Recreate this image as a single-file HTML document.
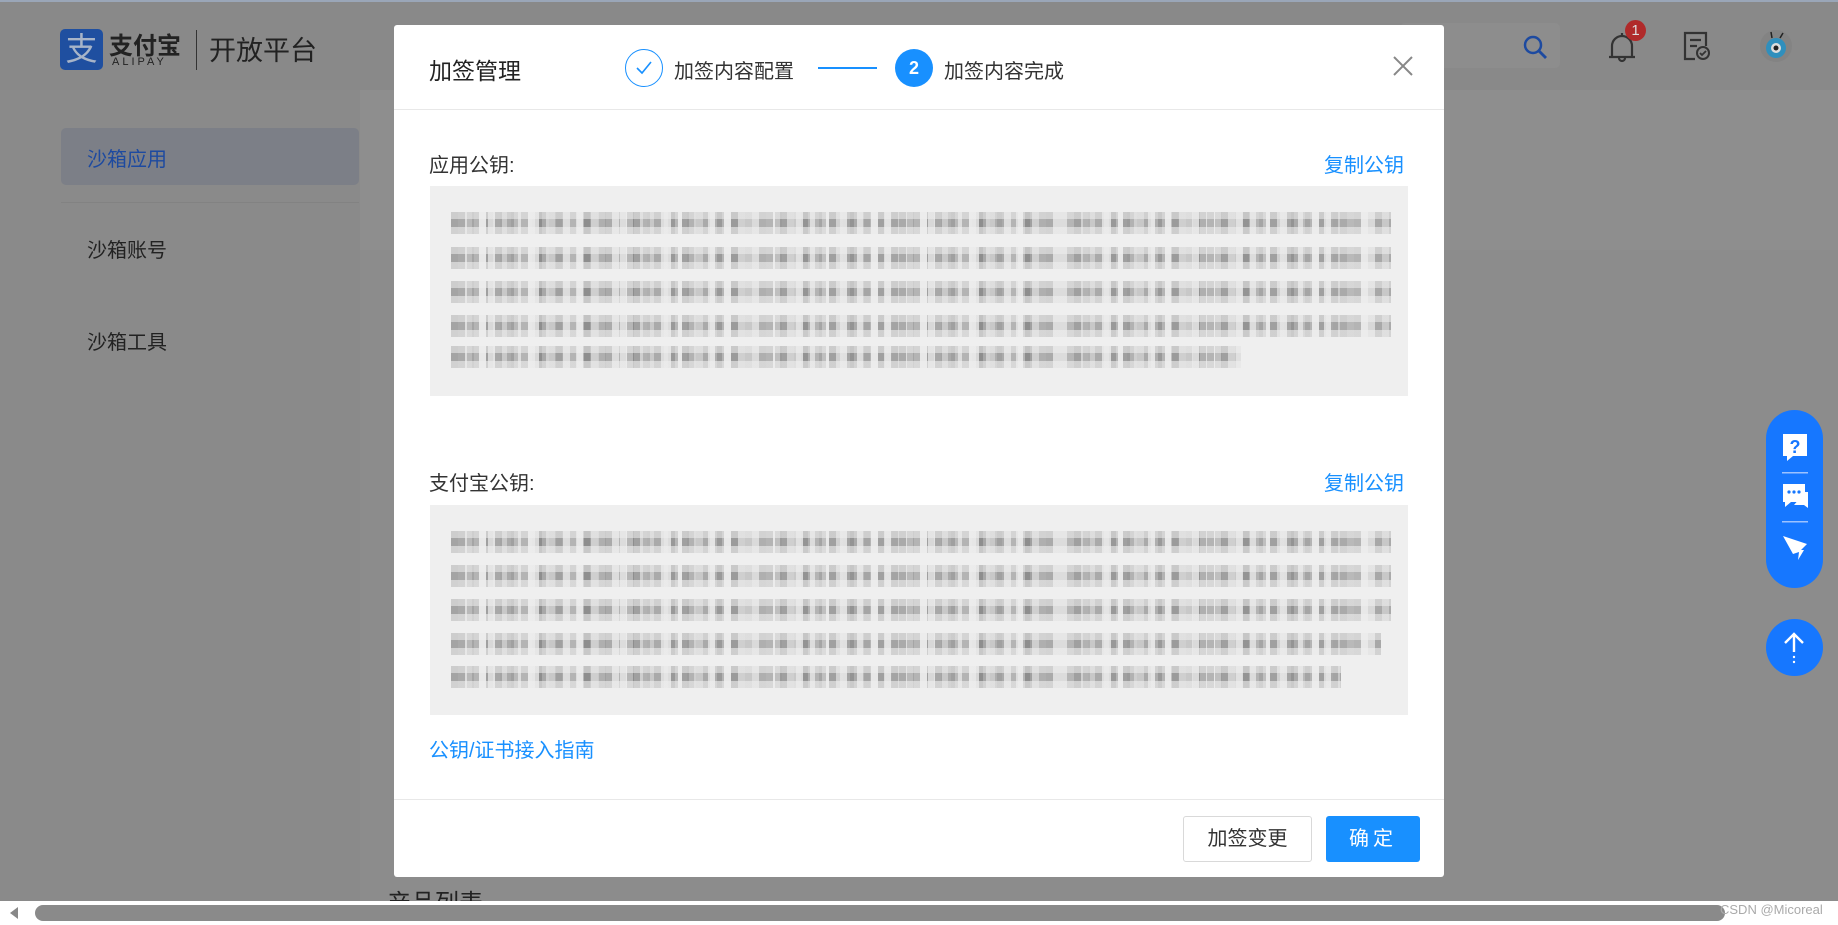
<!DOCTYPE html>
<html><head><meta charset="utf-8"><style>
*{margin:0;padding:0;box-sizing:border-box}
body{width:1838px;height:925px;position:relative;overflow:hidden;background:#8c8c8c;font-family:"Liberation Sans","Noto Sans CJK SC",sans-serif}
.abs{position:absolute}
.top{left:0;top:0;width:1838px;height:90px;background:#898989;border-top:2px solid #9aa6b8}
.side{left:0;top:90px;width:360px;height:835px;background:#8a8a8a}
.cont{left:360px;top:90px;width:1478px;height:160px;background:#8e8e8e}
.modal{left:394px;top:25px;width:1050px;height:852px;background:#fff;border-radius:3px}
.row{position:absolute;left:451px;height:22px;
background:
linear-gradient(180deg,rgba(239,239,239,.55) 0 7px,transparent 7px 15px,rgba(239,239,239,.6) 15px 22px),
repeating-linear-gradient(90deg,rgba(120,120,120,.45) 0 7px,transparent 7px 16px,rgba(150,150,150,.5) 16px 23px,transparent 23px 37px,rgba(230,230,230,.8) 37px 44px),
repeating-linear-gradient(90deg,#c8c8c8 0 7px,#aaa 7px 14px,#dcdcdc 14px 21px,#b4b4b4 21px 28px,#e8e8e8 28px 35px,#a0a0a0 35px 42px,#cfcfcf 42px 49px);}
.box{position:absolute;left:430px;width:978px;height:210px;background:#efefef}
.link{color:#1890ff;font-size:20px}
</style></head><body>
<div class="abs top"></div>
<div class="abs side"></div>
<div class="abs cont"></div>
<div class="abs" style="left:60px;top:29px;width:43px;height:41px;background:#1f4fa0;border-radius:5px;color:#a7b4c8;font-size:32px;line-height:41px;text-align:center">支</div>
<div class="abs" style="left:109px;top:26px;font-size:24px;font-weight:bold;color:#222">支付宝</div>
<div class="abs" style="left:112px;top:56px;font-size:11px;letter-spacing:3px;color:#222">ALIPAY</div>
<div class="abs" style="left:196px;top:30px;width:1px;height:40px;background:#333"></div>
<div class="abs" style="left:209px;top:29px;font-size:27px;color:#222">开放平台</div>
<div class="abs" style="left:61px;top:128px;width:298px;height:57px;background:#7c7f87;border-radius:5px"></div>
<div class="abs" style="left:87px;top:143px;font-size:20px;color:#1d4aa0">沙箱应用</div>
<div class="abs" style="left:61px;top:202px;width:298px;height:1px;background:#828282"></div>
<div class="abs" style="left:87px;top:234px;font-size:20px;color:#222">沙箱账号</div>
<div class="abs" style="left:87px;top:326px;font-size:20px;color:#222">沙箱工具</div>
<div class="abs" style="left:387px;top:883px;font-size:24px;color:#222">产品列表</div>
<div class="abs" style="left:1400px;top:23px;width:160px;height:45px;background:#8d8d8d;border-radius:5px"></div>
<svg class="abs" style="left:1522px;top:34px" width="28" height="28" viewBox="0 0 28 28"><circle cx="11" cy="11" r="8" fill="none" stroke="#1d4aa0" stroke-width="2.5"/><path d="M17 17l7 7" stroke="#1d4aa0" stroke-width="2.8"/></svg>
<svg class="abs" style="left:1607px;top:30px" width="30" height="34" viewBox="0 0 30 34"><path d="M5 27V16a10 10 0 0 1 20 0v11M2 27h26M15 6V3M12 28a3 3 0 0 0 6 0" fill="none" stroke="#333" stroke-width="2.2"/></svg>
<div class="abs" style="left:1625px;top:20px;width:21px;height:21px;border-radius:50%;background:#b02a2a;color:#ddd;font-size:15px;text-align:center;line-height:21px">1</div>
<svg class="abs" style="left:1682px;top:30px" width="30" height="32" viewBox="0 0 30 32"><path d="M13 29H3V3h21v13M8 10h11M8 16h7" fill="none" stroke="#333" stroke-width="2.2"/><circle cx="21" cy="23" r="6" fill="none" stroke="#333" stroke-width="2"/><path d="M18 23l2 2 4-4" fill="none" stroke="#333" stroke-width="1.8"/></svg>
<svg class="abs" style="left:1758px;top:28px" width="36" height="36" viewBox="0 0 36 36"><circle cx="18" cy="18" r="16" fill="#7a7a7a" opacity=".4"/><path d="M8 20a10 10 0 0 1 20 0 10 10 0 0 1-10 10 10 10 0 0 1-10-10z" fill="#2f8fbd"/><circle cx="18" cy="20" r="5" fill="#ddd"/><circle cx="18" cy="20" r="2.5" fill="#222"/><path d="M14 10l-1-6M22 10l3-5" stroke="#222" stroke-width="1.5"/></svg>
<div class="abs" style="left:1766px;top:410px;width:57px;height:178px;border-radius:29px;background:#1677ff"></div>
<svg class="abs" style="left:1779px;top:432px" width="32" height="140" viewBox="0 0 32 140">
<path d="M4 2h24v22H14l-6 5v-5H4z" fill="#fff"/><text x="16" y="21" font-size="18" font-weight="bold" fill="#1677ff" text-anchor="middle" font-family="Liberation Sans">?</text>
<rect x="3" y="40" width="26" height="1.5" fill="#9cc2ff"/>
<path d="M4 52h22v18H12l-6 5v-5H4z" fill="#fff"/><path d="M26 60h3v16l-4-3h-10" fill="#fff"/><circle cx="10" cy="60" r="1.6" fill="#1677ff"/><circle cx="15" cy="60" r="1.6" fill="#1677ff"/><circle cx="20" cy="60" r="1.6" fill="#1677ff"/>
<rect x="3" y="89" width="26" height="1.5" fill="#9cc2ff"/>
<path d="M4 104l24 8-6 6 3 0-6 10 1-8-6 2z" fill="#fff"/>
</svg>
<div class="abs" style="left:1766px;top:619px;width:57px;height:57px;border-radius:50%;background:#1677ff"></div>
<svg class="abs" style="left:1780px;top:630px" width="28" height="36" viewBox="0 0 28 36"><path d="M14 4v18M5 13l9-9 9 9" fill="none" stroke="#fff" stroke-width="2.4"/><circle cx="14" cy="27" r="1.2" fill="#fff"/><circle cx="14" cy="32" r="1.2" fill="#fff"/></svg>
<div class="abs" style="left:0;top:901px;width:1838px;height:24px;background:#fff"></div>
<div class="abs" style="left:35px;top:905px;width:1690px;height:16px;background:#8a8a8a;border-radius:8px"></div>
<div class="abs" style="left:10px;top:907px;width:0;height:0;border:6px solid transparent;border-right:8px solid #888;border-left:0"></div>
<div class="abs" style="left:1720px;top:902px;font-size:13px;color:#aaa">CSDN @Micoreal</div>
<div class="abs modal"></div>
<div class="abs" style="left:429px;top:52px;font-size:23px;color:#222">加签管理</div>
<div class="abs" style="left:625px;top:49px;width:38px;height:38px;border-radius:50%;border:1.5px solid #1890ff"></div>
<svg class="abs" style="left:634px;top:58px" width="20" height="20" viewBox="0 0 20 20"><path d="M3 10l5 5 9-11" fill="none" stroke="#1890ff" stroke-width="1.6"/></svg>
<div class="abs" style="left:674px;top:55px;font-size:20px;color:#333">加签内容配置</div>
<div class="abs" style="left:818px;top:67px;width:59px;height:2px;background:#1890ff"></div>
<div class="abs" style="left:895px;top:49px;width:38px;height:38px;border-radius:50%;background:#1890ff;color:#fff;font-size:18px;font-weight:bold;text-align:center;line-height:38px">2</div>
<div class="abs" style="left:944px;top:55px;font-size:20px;color:#333">加签内容完成</div>
<svg class="abs" style="left:1392px;top:55px" width="22" height="22" viewBox="0 0 22 22"><path d="M2 2l18 18M20 2L2 20" stroke="#888" stroke-width="2"/></svg>
<div class="abs" style="left:394px;top:109px;width:1050px;height:1px;background:#e8e8e8"></div>
<div class="abs" style="left:429px;top:149px;font-size:20px;color:#333">应用公钥:</div>
<div class="abs link" style="left:1324px;top:149px">复制公钥</div>
<div class="box" style="top:186px"></div>
<div class="row" style="top:212px;width:940px"></div>
<div class="row" style="top:247px;width:940px"></div>
<div class="row" style="top:281px;width:940px"></div>
<div class="row" style="top:315px;width:940px"></div>
<div class="row" style="top:346px;width:790px"></div>
<div class="abs" style="left:429px;top:467px;font-size:20px;color:#333">支付宝公钥:</div>
<div class="abs link" style="left:1324px;top:467px">复制公钥</div>
<div class="box" style="top:505px"></div>
<div class="row" style="top:531px;width:940px"></div>
<div class="row" style="top:565px;width:940px"></div>
<div class="row" style="top:599px;width:940px"></div>
<div class="row" style="top:633px;width:930px"></div>
<div class="row" style="top:666px;width:890px"></div>
<div class="abs link" style="left:429px;top:734px">公钥/证书接入指南</div>
<div class="abs" style="left:394px;top:799px;width:1050px;height:1px;background:#e8e8e8"></div>
<div class="abs" style="left:1183px;top:816px;width:129px;height:46px;border:1px solid #d9d9d9;border-radius:3px;font-size:20px;color:#333;text-align:center;line-height:44px">加签变更</div>
<div class="abs" style="left:1326px;top:816px;width:94px;height:46px;background:#1890ff;border-radius:3px;font-size:20px;color:#fff;text-align:center;line-height:46px;letter-spacing:4px">确定</div>
</body></html>
